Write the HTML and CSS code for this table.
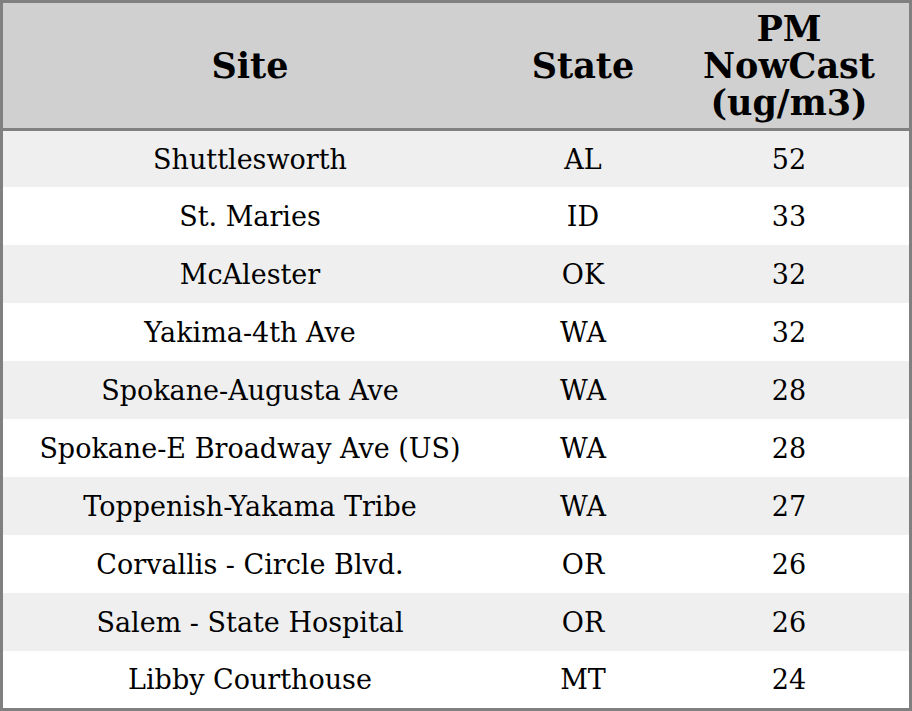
FILE: index.html
```html
<!DOCTYPE html>
<html>
<head>
<meta charset="utf-8">
<link rel="stylesheet" href="styles.css">
</head>
<body>
<table class="aq">
  <colgroup>
    <col class="c-site">
    <col class="c-state">
    <col class="c-pm">
  </colgroup>
  <thead>
    <tr><th>Site</th><th>State</th><th>PM<br>NowCast<br>(ug/m3)</th></tr>
  </thead>
  <tbody>
    <tr><td>Shuttlesworth</td><td>AL</td><td>52</td></tr>
    <tr><td>St. Maries</td><td>ID</td><td>33</td></tr>
    <tr><td>McAlester</td><td>OK</td><td>32</td></tr>
    <tr><td>Yakima-4th Ave</td><td>WA</td><td>32</td></tr>
    <tr><td>Spokane-Augusta Ave</td><td>WA</td><td>28</td></tr>
    <tr><td>Spokane-E Broadway Ave (US)</td><td>WA</td><td>28</td></tr>
    <tr><td>Toppenish-Yakama Tribe</td><td>WA</td><td>27</td></tr>
    <tr><td>Corvallis - Circle Blvd.</td><td>OR</td><td>26</td></tr>
    <tr><td>Salem - State Hospital</td><td>OR</td><td>26</td></tr>
    <tr><td>Libby Courthouse</td><td>MT</td><td>24</td></tr>
  </tbody>
</table>
</body>
</html>
```
FILE: styles.css
```css
html, body {
  margin: 0;
  padding: 0;
  background: #ffffff;
}
.aq {
  width: 912px;
  height: 711px;
  border-collapse: separate;
  border-spacing: 0;
  border: 3px solid #808080;
  font-family: "DejaVu Serif", serif;
  color: #000;
  table-layout: fixed;
}
.c-site { width: 494px; }
.c-state { width: 172px; }
.c-pm { width: 240px; }
.aq th {
  background: #d0d0d0;
  font-weight: bold;
  font-size: 35px;
  line-height: 37px;
  height: 125px;
  padding: 0;
  text-align: center;
  vertical-align: middle;
  border-bottom: 3px solid #808080;
}
.aq td {
  font-size: 27px;
  height: 58px;
  padding: 0;
  text-align: center;
  vertical-align: middle;
}
.aq tbody tr:first-child td {
  height: 56px;
}
.aq tbody tr:last-child td {
  height: 57px;
}
.aq tbody tr:nth-child(odd) td {
  background: #efefef;
}
```
